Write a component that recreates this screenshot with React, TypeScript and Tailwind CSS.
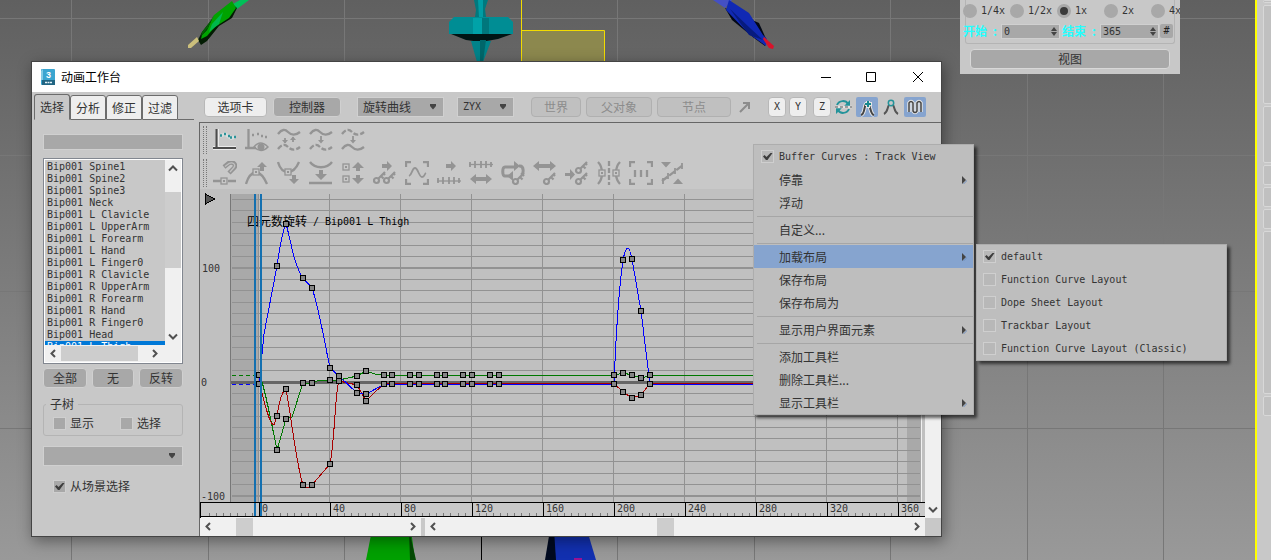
import type { ReactNode } from "react";

const bones = [
  "Spine1", "Spine2", "Spine3", "Neck",
  "L Clavicle", "L UpperArm", "L Forearm", "L Hand", "L Finger0",
  "R Clavicle", "R UpperArm", "R Forearm", "R Hand", "R Finger0",
  "Head", "L Thigh",
];

const tabs = ["选择", "分析", "修正", "过滤"];
const speeds = ["1/4x", "1/2x", "1x", "2x", "4x"];
const layouts = [
  "default",
  "Function Curve Layout",
  "Dope Sheet Layout",
  "Trackbar Layout",
  "Function Curve Layout (Classic)",
];

const menuGroups = [
  [
    { label: "停靠", sub: true },
    { label: "浮动" },
  ],
  [{ label: "自定义..." }],
  [
    { label: "加载布局", sub: true, active: true },
    { label: "保存布局" },
    { label: "保存布局为" },
  ],
  [{ label: "显示用户界面元素", sub: true }],
  [
    { label: "添加工具栏" },
    { label: "删除工具栏..." },
    { label: "显示工具栏", sub: true },
  ],
];

// keys of the curve editor
const flatX = [184, 192, 210, 219, 237, 245, 263, 272, 290, 299, 414, 450];
const keys: number[][] = [
  [59, 186], [59, 195], [77, 77], [86, 35], [103, 89], [112, 99], [130, 179], [139, 187],
  [157, 204], [166, 205], [77, 227], [86, 200], [103, 296], [112, 296], [130, 275], [139, 192],
  [157, 196], [166, 212], [77, 261], [86, 230], [103, 194], [112, 194], [130, 191],
  [157, 187], [166, 182], [423, 71], [432, 70], [441, 122], [423, 184], [432, 186], [441, 189],
  [423, 203], [432, 209], [441, 206],
  ...flatX.flatMap((x) => [[x, 186], [x, 195]]),
];

const Check = ({ label, checked = false, plain = false }: { label: string; checked?: boolean; plain?: boolean }) => (
  <label className={`flex items-center ${plain ? "gap-[5px] pt-px font-[DejaVu_Sans_Mono] text-[10px]" : "gap-1"}`}>
    <span className="relative block size-[13px]">
      <input
        type="checkbox"
        defaultChecked={checked}
        className={`block size-[13px] appearance-none border border-[#cfcfcf] ${plain ? "bg-[#b8b8b8]" : "bg-[#a8a8a8]"}`}
      />
      {checked && (
        <svg className="pointer-events-none absolute inset-0" width="13" height="13">
          <path d="M2 6.500l1.500-1.500L5.500 7 9.500 3h2L6.500 10H5z" fill="#3c3c3c" />
        </svg>
      )}
    </span>
    {label}
  </label>
);

const Drop = ({ label, name, className }: { label: string; name: string; className: string }) => (
  <div className={`relative h-5 ${className}`}>
    <select aria-label={name} className="h-full w-full appearance-none border border-[#d0d0d0] bg-[#a8a8a8] px-[5px] text-[#333]">
      <option>{label}</option>
    </select>
    <svg className="pointer-events-none absolute top-[7px] right-[7px]" width="8" height="6">
      <path d="M1 0h6v2L4 5.500 1 2z" fill="#444" />
    </svg>
  </div>
);

const Btn = ({ children, className }: { children: ReactNode; className: string }) => (
  <button className={`h-5 rounded-[4px] border ${className}`}>{children}</button>
);

const Arrow = ({ dir }: { dir: "left" | "right" | "up" | "down" }) => {
  const d = {
    left: "M10 5L6.500 8.500 10 12",
    right: "M6 5l3.500 3.500L6 12",
    up: "M4 10.500L8 6.500l4 4",
    down: "M4 6.500l4 4 4-4",
  }[dir];
  return (
    <svg width="16" height="17" className="shrink-0">
      <path d={d} fill="none" stroke="#505050" strokeWidth="2" />
    </svg>
  );
};

const Key = ({ x, y }: { x: number; y: number }) => (
  <g transform={`translate(${x} ${y})`} strokeWidth="2.200">
    <circle cx="3.500" cy="9.500" r="2.500" />
    <path d="M5 8l7-7M8 5l2.500 2.500M10.500 2.500L12 4" />
  </g>
);

const Box = ({ x, y }: { x: number; y: number }) => (
  <g>
    <rect x={x} y={y} width="6" height="6" fill="#c8c8c8" strokeWidth="1.300" />
    <rect x={x + 2} y={y + 2} width="2" height="2" fill="#949494" stroke="none" />
  </g>
);

const wave = "M1 6c4-5 7-5 10-2s7 4 12 0";
const corners = "M1 6V1h5M18 1h5v5M23 18v5h-5M6 23H1v-5";

const rowOne: ReactNode[] = [
  <g key="a">
    <path d="M4 1v20M0 20h23" stroke="#ebebeb" strokeWidth="4" />
    <path d="M3.500 1v19M0 20h23" stroke="#4c4c4c" strokeWidth="2.200" />
    <path d="M7 8l3-1 2-1 3 2 3 2 4-1" stroke="#d6dcdc" strokeWidth="3.500" />
    <path d="M7 7.500h2M11 6h2M15 8h2M17 9.500h2M21 9h2" stroke="#2a9298" strokeWidth="2.500" />
  </g>,
  <g key="b">
    <path d="M3.500 1v19M0 20h11" />
    <path d="M7 7h2M12 6h2M16 8h2M20 9h2" />
    <path d="M9 19q6-8 14 0q-7 7-14 0z" strokeWidth="1.500" />
    <circle cx="16" cy="19" r="3.500" fill="#949494" stroke="none" />
  </g>,
  <g key="c">
    <path d={wave} />
    <path d="M1 21c4-5 7-5 10-2s7 4 12 0" strokeDasharray="5 2" />
    <path d="M8 15v-5M16 9v5" strokeWidth="1.800" />
    <path d="M5 12h6L8 15.500zM13 12h6l-3-3.500z" fill="#949494" stroke="none" />
  </g>,
  <g key="d">
    <path d={wave} />
    <path d="M1 21c4-5 7-5 10-2s7 4 12 0" strokeDasharray="5 2" />
    <path d="M12 8v5" strokeWidth="1.800" />
    <path d="M9 12h6l-3 3.500z" fill="#949494" stroke="none" />
  </g>,
  <g key="e">
    <path d={wave} strokeDasharray="5 2" />
    <path d="M1 21c4-5 7-5 10-2s7 4 12 0" />
    <path d="M12 8v5" strokeWidth="1.800" />
    <path d="M9 12h6l-3 3.500z" fill="#949494" stroke="none" />
  </g>,
];

const rowTwo: ReactNode[] = [
  <g key="a">
    <path d="M11 6l5-4c4-2 8 2 5 5l-5 5" strokeWidth="4.500" />
    <path d="M12 5.500l4-3c4-2 7 1 5 4l-4 4.500" stroke="#c0c0c0" strokeWidth="1.300" />
    <path d="M0 20h8M15 20h8" />
    <Box x={8} y={17} />
  </g>,
  <g key="b">
    <path d="M1 23C3 16 6 12 11 11c5 1 8 5 11 12" />
    <Box x={8} y={8} />
    <path d="M17 1l5 5h-3v4h-4V6h-3z" fill="#949494" stroke="none" />
  </g>,
  <g key="c">
    <path d="M1 1c2 7 5 10 10 10s8-3 11-10" />
    <Box x={8} y={8} />
    <path d="M17 23l5-5h-3v-4h-4v4h-3z" fill="#949494" stroke="none" />
  </g>,
  <g key="d">
    <path d="M1 1c5 7 17 7 22 0M0 22h23" />
    <path d="M12 19l6-6h-4V9h-4v4H6z" fill="#949494" stroke="none" />
  </g>,
  <g key="e">
    <Box x={2} y={3} />
    <Box x={2} y={15} />
    <path d="M17 1l6 6h-4v3h-4V7h-4zM17 23l6-6h-4v-3h-4v3h-4z" fill="#949494" stroke="none" />
  </g>,
  <g key="f">
    <Key x={0} y={10} />
    <Key x={10} y={10} />
    <path d="M9 3h5V0l5 5-5 5V7H9z" fill="#949494" stroke="none" />
  </g>,
  <g key="g">
    <path d={corners} />
    <path d="M4 15c3-1 3-8 6-8s4 9 7 9 2-3 4-4" strokeWidth="1.800" />
  </g>,
  <g key="h">
    <path d="M9 3h5V0l5 5-5 5V7H9z" fill="#949494" stroke="none" />
    <path d="M1 17v5M6 16v7M12 16v7M17 16v7M22 17v5" strokeWidth="1.800" />
    <path d="M0 20h24" strokeWidth="1.300" />
  </g>,
  <g key="i">
    <path d="M1 1v5M6 0v7M12 0v7M17 0v7M22 1v5" strokeWidth="1.800" />
    <path d="M0 3.500h24" strokeWidth="1.300" />
    <path d="M1 18l6-5v3h10v-3l6 5-6 5v-3H7v3z" fill="#949494" stroke="none" />
  </g>,
  <g key="j">
    <path d="M8 15H4c-3 0-3-9 0-9h11M18 5h1c4 0 4 8 1 9" strokeWidth="3" />
    <path d="M13 0l6 5-6 5zM12 10v10l-6-5z" fill="#949494" stroke="none" />
    <Key x={11} y={11} />
  </g>,
  <g key="k">
    <path d="M0 5l6-5v3h11V0l6 5-6 5V7H6v3z" fill="#949494" stroke="none" />
    <Key x={10} y={11} />
  </g>,
  <g key="l">
    <path d="M0 12h5V8l5 5.500L5 19v-4H0z" fill="#949494" stroke="none" />
    <Key x={10} y={0} />
    <Key x={10} y={11} />
  </g>,
  <g key="m">
    <path d="M1 1c3 3 4 6 4 11s-1 8-4 11M23 1c-3 3-4 6-4 11s1 8 4 11" />
    <path d="M12 0v24" strokeDasharray="5 2" />
    <Box x={2} y={9} />
    <Box x={16} y={9} />
  </g>,
  <g key="n">
    <path d={corners} />
    <path d="M6 9v7M12 9v7M18 9v7" />
  </g>,
  <g key="o">
    <path d="M0 1h10L5 6.500zM12 23h10l-5-5.500z" fill="#949494" stroke="none" />
    <path d="M1 20L22 4" strokeDasharray="7 2" />
    <path d="M2 17v6M7 12v6M14 7v6M21 2v6" strokeWidth="1.800" />
  </g>,
];

const IconRow = ({ icons }: { icons: ReactNode[] }) => (
  <div className="flex h-[33px] items-center">
    <span className="ml-[3px] h-7 w-1 border-x border-dotted border-[#777]" />
    <div className="ml-[6px] flex gap-2">
      {icons.map((icon, i) => (
        <button key={i} aria-label={`工具 ${i + 1}`} className="block size-6">
          <svg width="24" height="24" fill="none" stroke="#949494" strokeWidth="2.300">
            {icon}
          </svg>
        </button>
      ))}
    </div>
  </div>
);

const Viewport = () => (
  <svg className="absolute inset-0 h-full w-full">
    <g stroke="#777">
      {[71, 208, 344, 481, 617, 754, 890, 1027, 1163].map((x) => (
        <line key={x} x1={x + 0.5} x2={x + 0.5} y1="0" y2="100%" />
      ))}
      {[18, 155, 291, 428].map((y) => (
        <line key={y} x1="0" x2="100%" y1={y + 0.5} y2={y + 0.5} />
      ))}
    </g>
    <path d="M481.500 500v60" stroke="#000" />
    <path d="M231 5l9-5h9l-12 9z" fill="#00c058" />
    <path d="M231 3l-12 9-10 11-7 9-4 8 3 5 6-4 12-15 13-8 5-10z" fill="#031c03" />
    <path d="M232 1l-18 14-7 15-5 5-1 4 6-3 8-9 14-9 7-10z" fill="#00a300" />
    <path d="M212 24l11-12-4 12-10 8z" fill="#00b84c" />
    <path d="M214 15l-6 13-7 8 1-4 7-9z" fill="#056005" />
    <path d="M197 37l-9 8v3h3l8-7z" fill="#cbbf7c" />
    <g>
      <path d="M474 0h14l-3 9 1 8h-11l1-7z" fill="#00797e" />
      <path d="M478 0h5v17h-4z" fill="#009da4" />
      <path d="M451 34h61l-14 5-17 3-15-2z" fill="#001515" />
      <path d="M454 17h54l5 5v12h-64V22z" fill="#008d94" />
      <path d="M473 18h9v16h-9z" fill="#00a2a8" />
      <path d="M482 18h7v16h-7z" fill="#00777c" />
      <path d="M471 41h20l-8 21h-6z" fill="#00838a" />
      <path d="M480 40h6l-3 22h-3z" fill="#00666a" />
    </g>
    <path d="M521.500 0v62M521.500 30.500h83v32" fill="none" stroke="#f2dc00" />
    <path d="M522 31h82v31h-82z" fill="#8c884e" />
    <path d="M713 0h19l-7 8z" fill="#4450c4" />
    <path d="M725 8l7 12 22 18 11 8 2-5-8-18z" fill="#030816" />
    <path d="M729 0l20 13 14 22 4 4-1 7-17-12-23-24z" fill="#1029b4" />
    <path d="M730 9l20 19 13 12-14-5z" fill="#071b7e" />
    <path d="M764 37l10 9-1 3-4-1-6-9z" fill="#d9132b" />
    <path d="M372 530h39l4 30h-49z" fill="#00a000" />
    <path d="M409 530l7 30h-6z" fill="#044a04" />
    <path d="M550 530h7v30h-12z" fill="#000a20" />
    <path d="M554 530h33l9 30h-40z" fill="#1230b0" />
    <path d="M574 558h8v2h-8z" fill="#9a1290" />
  </svg>
);

const Graph = () => (
  <svg className="block h-[313px] w-full bg-[#c0c0c0]" shapeRendering="crispEdges">
    <rect x="31" y="5" width="27" height="308" fill="#a9a9a9" />
    <rect x="707" y="5" width="14" height="308" fill="#a9a9a9" />
    <path d="M721.500 5v308" stroke="#f0f0f0" />
    <path d="M30.500 5v308" stroke="#777" />
    <g stroke="#929292">
      {Array.from({ length: 27 }, (_, i) => (
        <line key={i} x1="32" x2="720" y1={Math.round(11 + i * 11.4) - 0.5} y2={Math.round(11 + i * 11.4) - 0.5} strokeWidth={i === 6 || i === 26 ? 2 : 1} />
      ))}
      {Array.from({ length: 10 }, (_, i) => (
        <line key={i} x1={58.5 + i * 71} x2={58.5 + i * 71} y1="5" y2="313" />
      ))}
    </g>
    <path d="M31 193.500h690" stroke="#666" strokeWidth="3" />
    <path d="M5.500 5v10l9-5z" fill="#555" stroke="#000" />
    <g fill="#333" fontSize="10" fontFamily="DejaVu Sans Mono, monospace">
      <text x="2" y="83">100</text>
      <text x="1" y="197">0</text>
      <text x="1" y="311">-100</text>
    </g>
    <text x="47" y="37" fontSize="12" fontFamily="Noto Sans CJK SC, sans-serif">四元数旋转</text>
    <text x="113" y="36" fontSize="10" fontFamily="DejaVu Sans Mono, monospace">/ Bip001 L Thigh</text>
    <g fill="none">
      <path d="M32 186.500h27" stroke="#007800" strokeDasharray="4 3" />
      <path d="M32 195.500h27" stroke="#00f" strokeDasharray="4 3" />
      <path d="M59 186C63 190 69 222 77 261L86 230 92 228 103 194 112 194 119 191 130 191 139 191 157 187 166 182 175 185 184 186.500H414L423 184 432 186 441 189 450 186.500H720" stroke="#007800" />
      <path d="M59 195C63 204 68 235 74 236L77 227C79 214 82 202 86 200 92 232 96 274 103 296Q107 302 112 296L130 275C135 250 135 202 139 192L157 196 166 212 184 194.500H414L423 203 432 209 441 206 450 194.500H720" stroke="#a80000" />
      <path d="M59 195L64 145 77 77C80 57 82 43 86 35 91 51 93 74 103 89L112 99C119 119 126 161 130 179L139 187 157 204 166 205 184 195.500H414C416 145 420 92 423 71 426 56 429 55 432 70L441 122 450 195.500H720" stroke="#00f" />
    </g>
    <g fill="#858585" stroke="#000">
      {keys.map(([x, y], i) => (
        <rect key={i} x={x - 2.5} y={y - 2.5} width="5" height="5" />
      ))}
    </g>
    <path d="M55 5v308M61 5v308" stroke="#1470b0" strokeWidth="2" />
  </svg>
);

const Ruler = () => (
  <svg className="block h-4 w-full bg-[#c8c8c8]" shapeRendering="crispEdges">
    <path d="M0.500 16V0.500h724.500M0 14.500h725" fill="none" stroke="#000" />
    <path d="M1 15.500h724" stroke="#f4f4f4" />
    {Array.from({ length: 101 }, (_, i) => (
      <line key={i} x1={9.5 + Math.round(i * 7.1)} x2={9.5 + Math.round(i * 7.1)} y1="11" y2="14" stroke="#777" />
    ))}
    {Array.from({ length: 10 }, (_, i) => (
      <g key={i}>
        <line x1={59.5 + i * 71} x2={59.5 + i * 71} y1="1" y2="14" stroke="#000" />
        <text x={62 + i * 71} y="10" fontSize="10" fill="#333" fontFamily="DejaVu Sans Mono, monospace">
          {i * 40}
        </text>
      </g>
    ))}
    <path d="M55 1v13M61 1v13" stroke="#1470b0" strokeWidth="2" />
  </svg>
);

const SidePanel = () => (
  <aside className="w-[167px] shrink-0">
    <div role="tablist" className="flex h-7 items-end pl-[2px]">
      {tabs.map((tab, i) => (
        <button
          key={tab}
          role="tab"
          aria-selected={i === 0}
          className={`w-9 rounded-t-[3px] border border-[#6c6c6c] ${i === 0 ? "h-[26px] border-b-transparent bg-[#c8c8c8]" : "h-[25px] bg-[#eee]"}`}
        >
          {tab}
        </button>
      ))}
      <span className="mr-[5px] h-px grow bg-[#6c6c6c]" />
    </div>
    <div className="mr-4 ml-[11px] pt-[14px]">
      <input aria-label="搜索" className="block h-4 w-full border border-[#d0d0d0] bg-[#a8a8a8]" />
      <div className="mt-2 border border-[#828790]">
        <div className="border border-white">
          <div className="flex h-[185px]">
            <ul role="listbox" aria-label="对象" className="grow overflow-hidden pt-px font-[DejaVu_Sans_Mono] text-[10px] leading-3 whitespace-nowrap">
              {bones.map((bone) => (
                <li key={bone} role="option" aria-selected={bone === "L Thigh"} className={bone === "L Thigh" ? "bg-[#0078d7] pl-[2px] text-white" : "pl-[2px]"}>
                  Bip001 {bone}
                </li>
              ))}
            </ul>
            <div className="flex w-4 flex-col bg-[#f0f0f0]">
              <Arrow dir="up" />
              <span className="mt-[15px] h-[76px] bg-[#cdcdcd]" />
              <span className="grow" />
              <Arrow dir="down" />
            </div>
          </div>
          <div className="flex h-[17px] bg-[#f0f0f0]">
            <Arrow dir="left" />
            <span className="my-px w-[77px] bg-[#cdcdcd]" />
            <span className="w-[9px]" />
            <Arrow dir="right" />
          </div>
        </div>
      </div>
      <div className="mt-1 flex justify-between">
        <Btn className="w-11 border-[#d0d0d0] bg-[#a8a8a8]">全部</Btn>
        <Btn className="w-[42px] border-[#d0d0d0] bg-[#a8a8a8]">无</Btn>
        <Btn className="w-11 border-[#d0d0d0] bg-[#a8a8a8]">反转</Btn>
      </div>
      <fieldset className="mt-[10px] rounded-[3px] border border-[#b4b4b4] px-[9px] pb-1">
        <legend className="-ml-[7px] px-1 leading-3">子树</legend>
        <div className="flex items-center justify-between pr-3 pt-[5px]">
          <Check label="显示" />
          <Check label="选择" />
        </div>
      </fieldset>
      <Drop name="选择集" label="" className="mt-[10px]" />
      <div className="mt-3 ml-[10px]">
        <Check label="从场景选择" checked />
      </div>
    </div>
  </aside>
);

const Toolbar = () => (
  <div className="flex h-[30px] items-center pl-[5px]">
    <Btn className="w-[63px] border-[#b8b8b8] bg-[#eee]">选项卡</Btn>
    <Btn className="ml-[6px] w-[68px] border-[#d0d0d0] bg-[#a8a8a8]">控制器</Btn>
    <Drop name="曲线" label="旋转曲线" className="ml-4 w-[87px]" />
    <Drop name="轴顺序" label="ZYX" className="ml-[13px] w-[57px] font-[DejaVu_Sans_Mono] text-[10px]" />
    <div className="ml-[17px] flex gap-[5px] text-[#8c8c8c]">
      <Btn className="w-[50px] border-[#b0b0b0] bg-[#c0c0c0]">世界</Btn>
      <Btn className="w-[66px] border-[#b0b0b0] bg-[#c0c0c0]">父对象</Btn>
      <Btn className="w-[74px] border-[#b0b0b0] bg-[#c0c0c0]">节点</Btn>
    </div>
    <button aria-label="拾取" className="ml-2">
      <svg width="12" height="12">
        <path d="M1 11l8-8M4 2h6v6" fill="none" stroke="#8c8c8c" strokeWidth="2" />
      </svg>
    </button>
    <div className="ml-[17px] flex font-[DejaVu_Sans_Mono] text-[10px]">
      <Btn className="w-[18px] border-[#b8b8b8] bg-[#eee]">X</Btn>
      <Btn className="ml-[3px] w-[18px] border-[#b8b8b8] bg-[#eee]">Y</Btn>
      <Btn className="ml-[6px] w-[18px] border-[#b8b8b8] bg-[#eee]">Z</Btn>
    </div>
    <button aria-label="循环" className="ml-1">
      <svg width="17" height="16" fill="none" stroke="#23939a" strokeWidth="2">
        <path d="M2 6c2-5 9-5 11-1M14 10c-2 5-9 5-11 1" />
        <path d="M15 1v6H9zM1 15V9h6z" fill="#23939a" stroke="none" />
        <path d="M0 8h17" stroke="#e4e4e4" strokeWidth="2.500" />
        <path d="M0 8h17" stroke="#555" strokeWidth="1" strokeDasharray="3 2" />
      </svg>
    </button>
    <button aria-label="添加关键点" className="ml-1 h-5 w-[22px] rounded-[2px] bg-[#86a4cf]">
      <svg width="22" height="20" fill="none">
        <path d="M5 18c4-1 3-9 5-11M12 7c3 2 2 10 6 11" stroke="#e4e4e4" strokeWidth="4" />
        <path d="M5 18c4-1 3-9 5-11M12 7c3 2 2 10 6 11" stroke="#444" strokeWidth="2" />
        <path d="M12 4v7M9 7h7" stroke="#e4e4e4" strokeWidth="4" />
        <path d="M12 4v6M9 7h6" stroke="#16878e" strokeWidth="2" />
      </svg>
    </button>
    <button aria-label="移动关键点" className="ml-[5px]">
      <svg width="16" height="20" fill="none">
        <path d="M1 17c4-2 3-6 5-9M15 17c-4-2-3-6-5-9" stroke="#555" strokeWidth="2" />
        <circle cx="8" cy="6" r="2.700" stroke="#23939a" strokeWidth="1.500" />
      </svg>
    </button>
    <button aria-label="曲线切换" className="ml-[5px] h-5 w-[22px] rounded-[2px] bg-[#86a4cf]">
      <svg width="22" height="20" fill="none">
        <path d="M5 15V6q2-3 4 0v8q2 3 4 0V6q2-3 4 0v9" stroke="#e4e4e4" strokeWidth="3.500" />
        <path d="M5 15V6q2-3 4 0v8q2 3 4 0V6q2-3 4 0v9" stroke="#444" strokeWidth="1.500" />
      </svg>
    </button>
  </div>
);

const Workbench = () => (
  <section className="absolute top-[61px] right-[329px] left-[31px] border border-[#444] bg-[#c8c8c8] shadow-[2px_4px_14px_rgba(0,0,0,0.4)]">
    <header className="flex h-[30px] items-center bg-white pl-[9px] text-black">
      <svg width="14" height="16">
        <rect width="14" height="16" rx="1" fill="#3aa5d0" />
        <path d="M0 2l2-2v11H0z" fill="#83cbe5" />
        <path d="M1 11h13v5H1z" fill="#216583" />
        <text x="5" y="9" fontSize="9" fontWeight="bold" fill="#fff" fontFamily="Liberation Sans, sans-serif">3</text>
        <path d="M4 13.500h7" stroke="#e8f4fa" strokeWidth="1.500" strokeDasharray="2 0.500" />
      </svg>
      <h1 className="ml-[6px] grow">动画工作台</h1>
      <div className="flex">
        {["M18 14.500h10", "M17.500 9.500h9v9h-9z", "M18 9l10 10M28 9L18 19"].map((d, i) => (
          <button key={d} aria-label={["最小化", "最大化", "关闭"][i]} className="h-[28px] w-[46px]">
            <svg width="46" height="28">
              <path d={d} fill="none" stroke="#000" />
            </svg>
          </button>
        ))}
      </div>
    </header>
    <div className="flex">
      <SidePanel />
      <main className="min-w-0 grow">
        <Toolbar />
        <div className="border-t border-l border-[#666]">
          <IconRow icons={rowOne} />
          <IconRow icons={rowTwo} />
          <div className="flex">
            <div className="min-w-0 grow">
              <Graph />
              <Ruler />
            </div>
            <div className="flex w-4 flex-col justify-end bg-[#f0f0f0]">
              <Arrow dir="down" />
            </div>
          </div>
          <div className="flex h-[18px] bg-[#c8c8c8]">
            <div className="flex w-[221px] bg-[#f0f0f0]">
              <Arrow dir="left" />
              <span className="grow-20" />
              <span className="w-[17px] bg-[#cdcdcd]" />
              <span className="grow-152" />
              <Arrow dir="right" />
            </div>
            <div className="mr-4 ml-1 flex grow bg-[#f0f0f0]">
              <Arrow dir="left" />
              <span className="grow-216" />
              <span className="w-[17px] bg-[#cdcdcd]" />
              <span className="grow-234" />
              <Arrow dir="right" />
            </div>
          </div>
        </div>
      </main>
    </div>
  </section>
);

const TimePanel = () => (
  <section className="absolute top-0 left-[960px] w-[220px] overflow-hidden bg-[#c8c8c8] pb-[5px]">
    <div className="mx-[5px] h-11 rounded-b-[3px] border-x border-b border-[#b4b4b4]">
      <div className="-ml-[3px] flex h-[22px] items-center font-[DejaVu_Sans_Mono] text-[10px]">
        {speeds.map((speed) => (
          <label key={speed} className="flex w-[47px] shrink-0 items-center gap-1">
            <input
              type="radio"
              name="speed"
              defaultChecked={speed === "1x"}
              className="size-[14px] appearance-none rounded-full border-[3px] border-[#a8a8a8] bg-[#a8a8a8] checked:bg-[#3a3a3a]"
            />
            {speed}
          </label>
        ))}
      </div>
      <div className="-ml-[3px] flex h-[18px] items-center text-[#2ff]">
        {[["开始", "0"], ["结束", "365"]].map(([name, value]) => (
          <label key={name} className="mr-[2px] flex items-center font-bold">
            <span className="flex w-[38px] justify-between pr-1">
              {name}
              <span>:</span>
            </span>
            <span className="relative">
              <input
                defaultValue={value}
                className="block h-[15px] w-[59px] border border-[#d0d0d0] bg-[#a8a8a8] px-[2px] font-[DejaVu_Sans_Mono] text-[10px] font-normal text-[#333]"
              />
              <svg className="absolute top-[3px] right-[3px]" width="6" height="9">
                <path d="M0 4l3-4 3 4zM0 5h6L3 9z" fill="#444" />
              </svg>
            </span>
          </label>
        ))}
        <button className="-ml-px h-[14px] w-[13px] shrink-0 rounded-[2px] bg-[#a8a8a8] font-[DejaVu_Sans_Mono] text-[10px] leading-[14px] text-[#222]">#</button>
      </div>
    </div>
    <div className="mx-[10px] mt-[5px] flex">
      <Btn className="grow border-[#d8d8d8] bg-[#a8a8a8]">视图</Btn>
    </div>
  </section>
);

const menuRow = "flex h-[23px] w-full items-center";

const ContextMenu = () => (
  <div role="menu" className="absolute top-[144px] left-[753px] w-[221px] border border-[#adadad] bg-[#bebebe] shadow-[3px_3px_3px_rgba(0,0,0,0.6)]">
    <div className={`${menuRow} pl-[7px]`}>
      <Check label="Buffer Curves : Track View" checked plain />
    </div>
    {menuGroups.map((group, i) => (
      <div key={i}>
        {i > 0 && <hr className="my-px ml-[3px] h-[2px] border-t-0 border-b border-[#a6a6a6]" />}
        {group.map((item) => (
          <button
            key={item.label}
            role="menuitem"
            className={`${menuRow} pr-[6px] pl-[25px] ${"active" in item ? "bg-[#86a4cf]" : ""}`}
          >
            {item.label}
            {"sub" in item && (
              <svg className="ml-auto" width="6" height="8">
                <path d="M2 8l4-4v1L3 8z" fill="#7090c0" />
                <path d="M1 0l4 4-4 4z" fill="#444" />
              </svg>
            )}
          </button>
        ))}
      </div>
    ))}
  </div>
);

const LayoutMenu = () => (
  <div role="menu" className="absolute top-[244px] left-[976px] w-[251px] border border-[#adadad] bg-[#bebebe] shadow-[3px_3px_3px_rgba(0,0,0,0.6)]">
    {layouts.map((name, i) => (
      <div key={name} className={`${menuRow} pl-[6px]`}>
        <Check label={name} checked={i === 0} plain />
      </div>
    ))}
  </div>
);

const CommandPanel = () => (
  <aside className="absolute inset-y-0 right-0 flex w-4 flex-col gap-[2px] overflow-hidden border-l-2 border-[#ff0] bg-[#c8c8c8] pl-[6px]">
    {["h-[3px]", "h-[99px]", "h-[57px]", "h-5", "h-5", "h-5", "h-[163px]", "h-5"].map((h, i) => (
      <span key={i} className={`w-5 shrink-0 rounded-[2px] border border-[#d8d8d8] bg-[#c0c0c0] ${h}`} />
    ))}
  </aside>
);

export default function App() {
  return (
    <div className="relative min-h-screen w-full overflow-hidden bg-linear-to-b from-[#606060] to-[#999] font-['Noto_Sans_CJK_SC',sans-serif] text-xs text-[#333]">
      <Viewport />
      <Workbench />
      <TimePanel />
      <CommandPanel />
      <ContextMenu />
      <LayoutMenu />
    </div>
  );
}
